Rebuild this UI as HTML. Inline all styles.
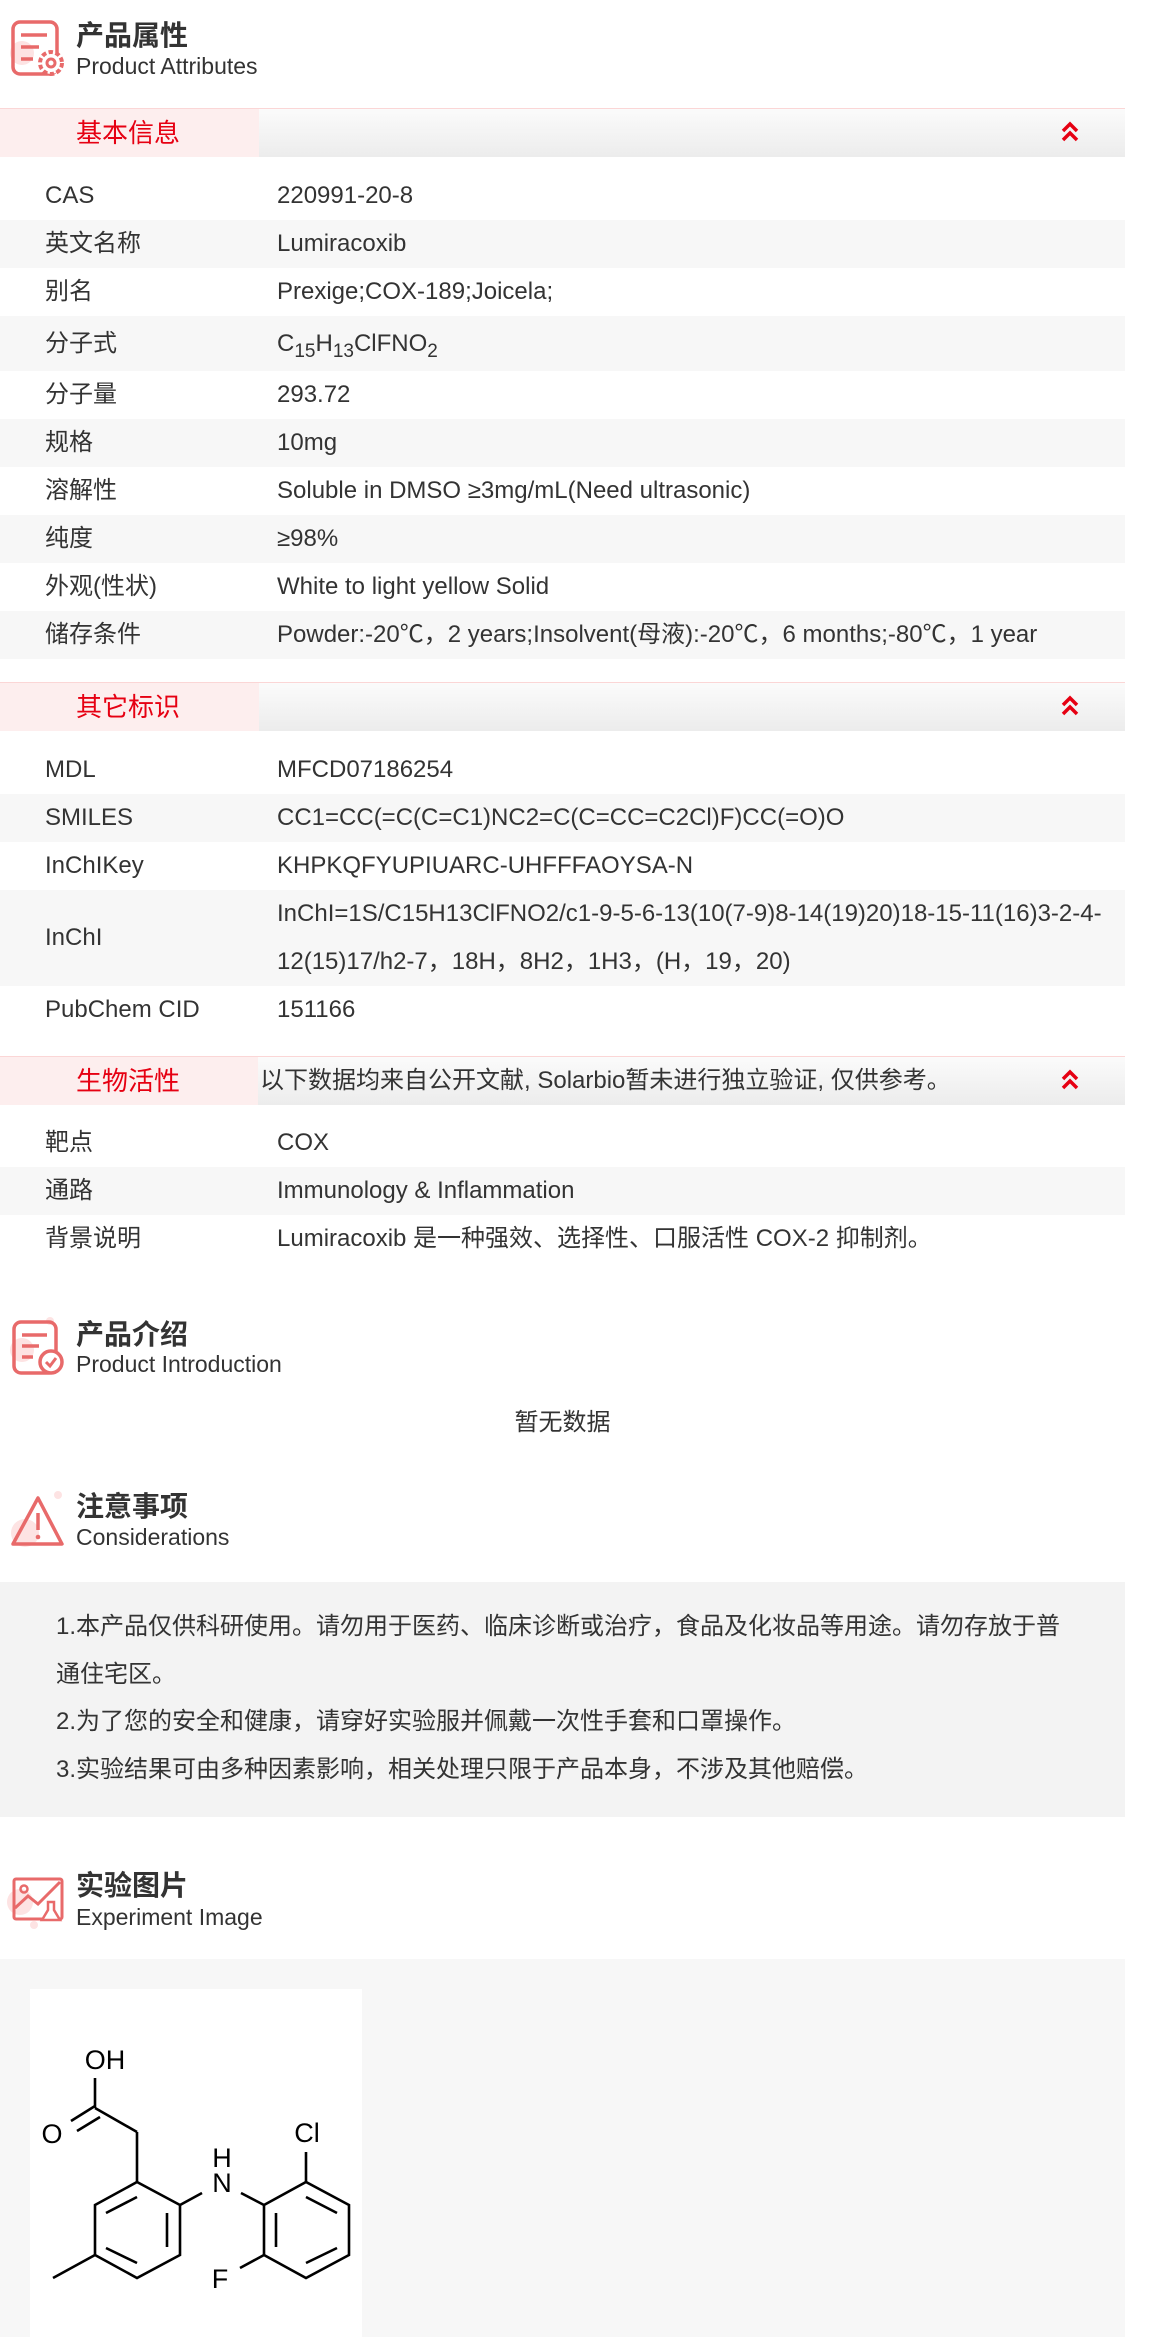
<!DOCTYPE html>
<html><head><meta charset="utf-8"><style>
*{margin:0;padding:0;box-sizing:border-box}
body{width:1149px;height:2337px;position:relative;background:#fff;font-family:"Liberation Sans","Noto Sans CJK SC",sans-serif;color:#333;overflow:hidden}
.a{position:absolute}
.t{position:absolute;left:76px;font-size:28px;font-weight:bold;color:#333;line-height:30px;white-space:nowrap}
.s{position:absolute;left:76px;font-size:23px;color:#333;line-height:26px;white-space:nowrap}
.bar{position:absolute;left:0;width:1125px;height:49px;border-top:1px solid #fbd6d6;background:linear-gradient(#fbfbfb,#ececec)}
.bar .p{position:absolute;left:0;top:0;width:259px;height:48px;background:#fdeeee}
.bar .p span{position:absolute;left:76px;top:8px;font-size:26px;color:#e60012;line-height:32px}
.bar svg{position:absolute;left:1060px;top:12px}
.row{position:absolute;left:0;width:1125px;height:48px;font-size:24px;line-height:48px;white-space:nowrap}
.row.g{background:#f7f7f7}
.row .l{position:absolute;left:45px;top:0}
.row .v{position:absolute;left:277px;top:0}
sub{font-size:19px;vertical-align:-6px;line-height:0}
.note{position:absolute;left:56px;width:1015px;font-size:24px;line-height:48px;color:#333}
</style></head><body>

<svg class="a" style="left:8px;top:17px" width="58" height="62" viewBox="0 0 58 62">
<circle cx="14" cy="36" r="12" fill="#fde3e3"/>
<rect x="5" y="5" width="44" height="52" rx="7" fill="none" stroke="#e86a6a" stroke-width="3.5"/>
<line x1="13" y1="18" x2="39" y2="18" stroke="#e86a6a" stroke-width="3.5"/>
<line x1="13" y1="30" x2="31" y2="30" stroke="#e86a6a" stroke-width="3.5"/>
<line x1="13" y1="42" x2="25" y2="42" stroke="#e86a6a" stroke-width="3.5"/>
<circle cx="43" cy="46" r="11" fill="#fff" stroke="#e86a6a" stroke-width="4" stroke-dasharray="4.5 2.5"/>
<circle cx="43" cy="46" r="4" fill="none" stroke="#e86a6a" stroke-width="3"/>
</svg>
<div class="t" style="top:21px">产品属性</div>
<div class="s" style="top:53px">Product Attributes</div>

<div class="bar" style="top:108px"><div class="p"><span>基本信息</span></div>
<svg width="20" height="22" viewBox="0 0 20 22"><path d="M3 10 L10 3 L17 10 M3 19 L10 12 L17 19" fill="none" stroke="#e60012" stroke-width="3.5"/></svg></div>

<div class="row" style="top:172px"><span class="l">CAS</span><span class="v">220991-20-8</span></div>
<div class="row g" style="top:220px"><span class="l">英文名称</span><span class="v">Lumiracoxib</span></div>
<div class="row" style="top:268px"><span class="l">别名</span><span class="v">Prexige;COX-189;Joicela;</span></div>
<div class="row g" style="top:316px;height:55px;line-height:55px"><span class="l">分子式</span><span class="v">C<sub>15</sub>H<sub>13</sub>ClFNO<sub>2</sub></span></div>
<div class="row" style="top:371px"><span class="l">分子量</span><span class="v">293.72</span></div>
<div class="row g" style="top:419px"><span class="l">规格</span><span class="v">10mg</span></div>
<div class="row" style="top:467px"><span class="l">溶解性</span><span class="v">Soluble in DMSO ≥3mg/mL(Need ultrasonic)</span></div>
<div class="row g" style="top:515px"><span class="l">纯度</span><span class="v">≥98%</span></div>
<div class="row" style="top:563px"><span class="l">外观(性状)</span><span class="v">White to light yellow Solid</span></div>
<div class="row g" style="top:611px"><span class="l">储存条件</span><span class="v">Powder:-20℃，2 years;Insolvent(母液):-20℃，6 months;-80℃，1 year</span></div>

<div class="bar" style="top:682px"><div class="p"><span>其它标识</span></div>
<svg width="20" height="22" viewBox="0 0 20 22"><path d="M3 10 L10 3 L17 10 M3 19 L10 12 L17 19" fill="none" stroke="#e60012" stroke-width="3.5"/></svg></div>

<div class="row" style="top:746px"><span class="l">MDL</span><span class="v">MFCD07186254</span></div>
<div class="row g" style="top:794px"><span class="l">SMILES</span><span class="v">CC1=CC(=C(C=C1)NC2=C(C=CC=C2Cl)F)CC(=O)O</span></div>
<div class="row" style="top:842px"><span class="l">InChIKey</span><span class="v">KHPKQFYUPIUARC-UHFFFAOYSA-N</span></div>
<div class="row g" style="top:890px;height:96px"><span class="l" style="top:24px">InChI</span><span class="v">InChI=1S/C15H13ClFNO2/c1-9-5-6-13(10(7-9)8-14(19)20)18-15-11(16)3-2-4-<br>12(15)17/h2-7，18H，8H2，1H3，(H，19，20)</span></div>
<div class="row" style="top:986px"><span class="l">PubChem CID</span><span class="v">151166</span></div>

<div class="bar" style="top:1056px"><div class="p" style="width:258px"><span>生物活性</span></div>
<span class="a" style="left:260px;top:8px;font-size:24px;line-height:32px;color:#333;white-space:nowrap">以下数据均来自公开文献, Solarbio暂未进行独立验证, 仅供参考。</span>
<svg width="20" height="22" viewBox="0 0 20 22"><path d="M3 10 L10 3 L17 10 M3 19 L10 12 L17 19" fill="none" stroke="#e60012" stroke-width="3.5"/></svg></div>

<div class="row" style="top:1119px"><span class="l">靶点</span><span class="v">COX</span></div>
<div class="row g" style="top:1167px"><span class="l">通路</span><span class="v">Immunology &amp; Inflammation</span></div>
<div class="row" style="top:1215px"><span class="l">背景说明</span><span class="v">Lumiracoxib 是一种强效、选择性、口服活性 COX-2 抑制剂。</span></div>

<svg class="a" style="left:8px;top:1314px" width="58" height="64" viewBox="0 0 58 64">
<circle cx="14" cy="36" r="12" fill="#fde3e3"/><circle cx="42" cy="7" r="4" fill="#fde3e3"/>
<rect x="6" y="8" width="42" height="51" rx="7" fill="none" stroke="#e86a6a" stroke-width="3.5"/>
<line x1="14" y1="21" x2="39" y2="21" stroke="#e86a6a" stroke-width="3.5"/>
<line x1="14" y1="32" x2="31" y2="32" stroke="#e86a6a" stroke-width="3.5"/>
<line x1="14" y1="43" x2="25" y2="43" stroke="#e86a6a" stroke-width="3.5"/>
<circle cx="43" cy="48" r="11" fill="#fff" stroke="#e86a6a" stroke-width="3.5"/>
<path d="M38 48 L42 52 L48 44" fill="none" stroke="#e86a6a" stroke-width="3"/>
</svg>
<div class="t" style="top:1320px">产品介绍</div>
<div class="s" style="top:1351px">Product Introduction</div>
<div class="a" style="left:0;width:1125px;top:1408px;text-align:center;font-size:24px;line-height:30px">暂无数据</div>

<svg class="a" style="left:8px;top:1488px" width="58" height="62" viewBox="0 0 58 62">
<circle cx="17" cy="45" r="14" fill="#fde3e3"/><circle cx="50" cy="7" r="4" fill="#fde3e3"/>
<path d="M30 10 L54 56 L5 56 Z" fill="none" stroke="#e86a6a" stroke-width="3.5" stroke-linejoin="round"/>
<line x1="30" y1="25" x2="30" y2="42" stroke="#e86a6a" stroke-width="3.5"/>
<circle cx="30" cy="49" r="2.3" fill="#e86a6a"/>
</svg>
<div class="t" style="top:1492px">注意事项</div>
<div class="s" style="top:1524px">Considerations</div>
<div class="a" style="left:0;top:1582px;width:1125px;height:235px;background:#f3f3f3"></div>
<div class="note" style="top:1603px">1.本产品仅供科研使用。请勿用于医药、临床诊断或治疗，食品及化妆品等用途。请勿存放于普通住宅区。</div>
<div class="note" style="top:1698px">2.为了您的安全和健康，请穿好实验服并佩戴一次性手套和口罩操作。</div>
<div class="note" style="top:1746px">3.实验结果可由多种因素影响，相关处理只限于产品本身，不涉及其他赔偿。</div>

<svg class="a" style="left:2px;top:1870px" width="66" height="60" viewBox="0 0 66 60">
<circle cx="18" cy="32" r="13" fill="#fde3e3"/><circle cx="32" cy="55" r="4" fill="#fde3e3"/>
<rect x="12" y="9" width="48" height="40" rx="2" fill="none" stroke="#e86a6a" stroke-width="3"/>
<circle cx="22" cy="19" r="3.5" fill="none" stroke="#e86a6a" stroke-width="2.5"/>
<path d="M13 38 L26 26 L36 34 L58 12" fill="none" stroke="#e86a6a" stroke-width="3"/>
<path d="M46 32 L46 40 L40 50 L58 50 L52 40 L52 32 Z" fill="#fff" stroke="#e86a6a" stroke-width="2.5"/>
</svg>
<div class="t" style="top:1871px">实验图片</div>
<div class="s" style="top:1904px">Experiment Image</div>
<div class="a" style="left:0;top:1959px;width:1125px;height:378px;background:#f7f7f7"></div>
<svg class="a" style="left:30px;top:1989px;background:#fff" width="332" height="348" viewBox="30 1989 332 348">
<g stroke="#000" stroke-width="2.6" fill="none">
<line x1="95" y1="2078" x2="95" y2="2108"/>
<line x1="71" y1="2121" x2="95" y2="2106"/>
<line x1="77" y1="2131" x2="100" y2="2117"/>
<line x1="95" y1="2108" x2="137" y2="2132"/>
<line x1="137" y1="2132" x2="137" y2="2182"/>
<path d="M137 2182 L180 2205 L180 2255 L137 2278 L95 2255 L95 2205 Z"/>
<line x1="106" y1="2213" x2="137" y2="2197"/>
<line x1="167" y1="2213" x2="167" y2="2247"/>
<line x1="106" y1="2248" x2="137" y2="2263"/>
<line x1="95" y1="2255" x2="53" y2="2278"/>
<line x1="180" y1="2205" x2="202" y2="2193"/>
<line x1="241" y1="2193" x2="264" y2="2205"/>
<path d="M264 2205 L306 2182 L349 2205 L349 2255 L306 2278 L264 2255 Z"/>
<line x1="276" y1="2213" x2="276" y2="2247"/>
<line x1="306" y1="2197" x2="337" y2="2213"/>
<line x1="306" y1="2263" x2="337" y2="2248"/>
<line x1="306" y1="2182" x2="306" y2="2152"/>
<line x1="264" y1="2255" x2="240" y2="2268"/>
</g>
<g font-family="Liberation Sans,sans-serif" font-size="27" fill="#000" text-anchor="middle">
<text x="105" y="2069">OH</text>
<text x="52" y="2143">O</text>
<text x="222" y="2167">H</text>
<text x="222" y="2192">N</text>
<text x="307" y="2142">Cl</text>
<text x="220" y="2288">F</text>
</g>
</svg>
</body></html>
